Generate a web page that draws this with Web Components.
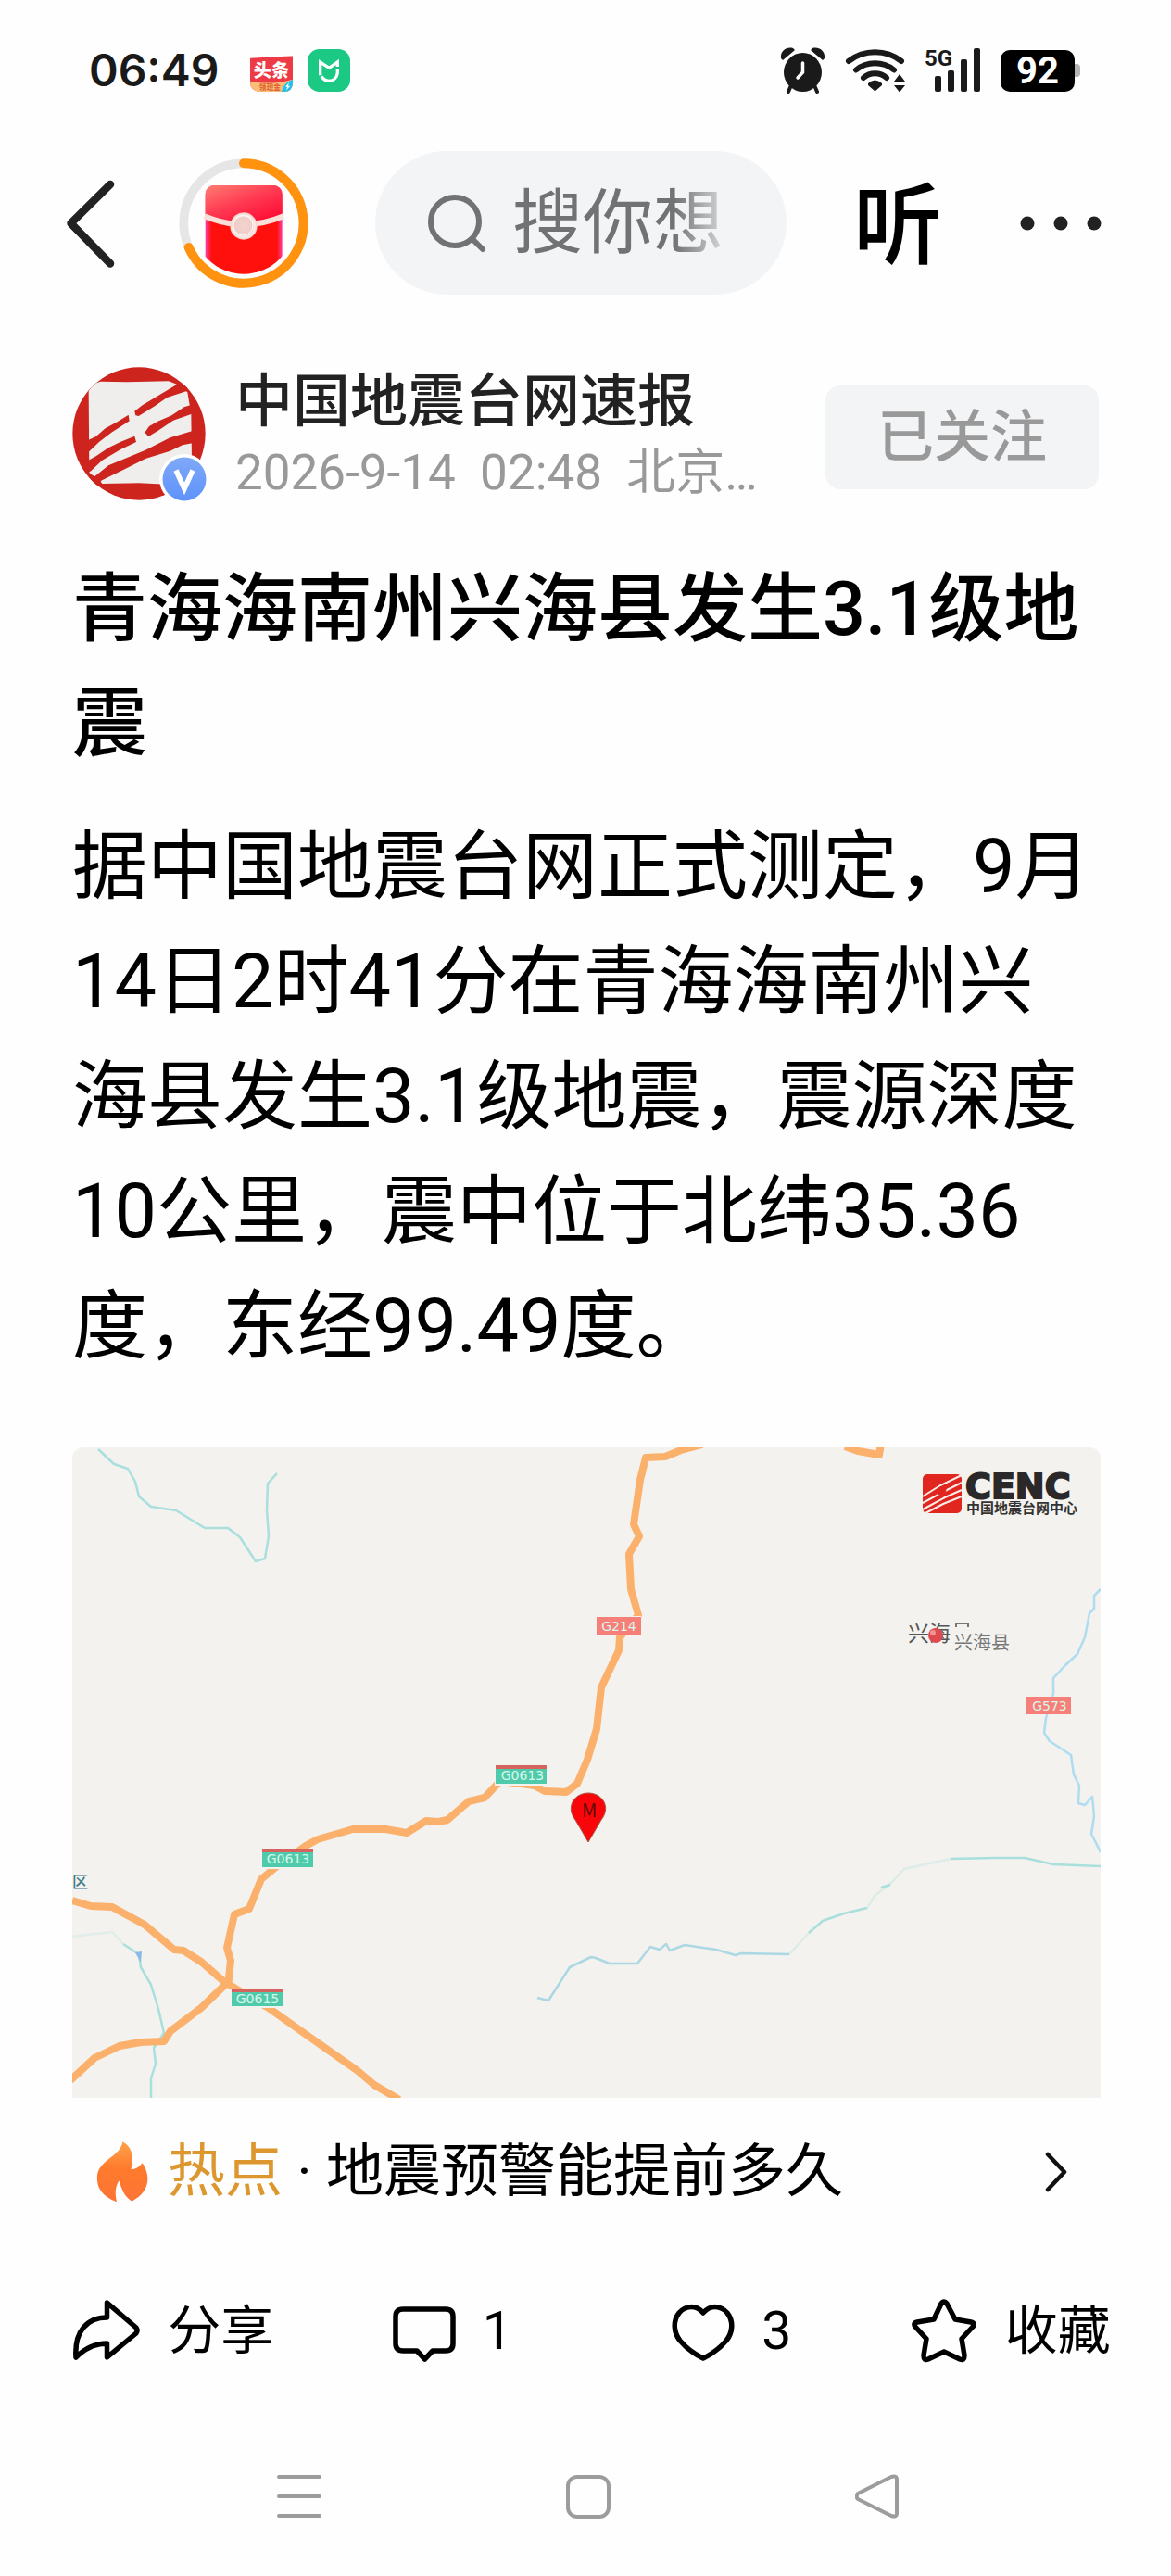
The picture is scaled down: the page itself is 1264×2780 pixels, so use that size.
<!DOCTYPE html>
<html lang="zh-CN">
<head>
<meta charset="utf-8">
<meta name="viewport" content="width=device-width, initial-scale=1">
<title>青海海南州兴海县发生3.1级地震</title>
<style>
  html { background: #fefefe; }
  body { margin: 0; color: #000; font-family: Roboto, "Noto Sans CJK SC", sans-serif; }
</style>
</head>
<body>
<article-screen></article-screen>

<script>
const define = (name, html) => {
  const template = document.createElement('template');
  template.innerHTML = `<style>
    :host { display: block; }
    * { box-sizing: border-box; }
    svg { display: block; flex: none; }
    button { font: inherit; color: inherit; background: none; border: 0; padding: 0; margin: 0; cursor: pointer; }
    a { color: inherit; text-decoration: none; }
  </style>` + html;
  customElements.define(name, class extends HTMLElement {
    constructor() {
      super();
      this.attachShadow({ mode: 'open' }).append(template.content.cloneNode(true));
    }
  });
};

define('status-bar', `
  <style>
    :host { display: flex; align-items: center; height: 152px; padding: 0 98px 0 96px; color: #1a1a1a; }
    time { font: 600 48px/60px Inter, sans-serif; }
    .apps { display: flex; gap: 16px; margin-left: 34px; align-items: center; }
    .system { display: flex; align-items: center; gap: 20px; margin-left: auto; }
    .battery { display: flex; align-items: center; }
    .level { width: 80px; height: 45px; border-radius: 10px; background: #000; color: #fff; font: 700 40px/46px Roboto, sans-serif; text-align: center; }
    .nub { width: 6px; height: 14px; background: #b5b5b5; border-radius: 0 4px 4px 0; }
  </style>
  <time>06:49</time>
  <div class="apps">
    <svg width="46" height="46" viewBox="252 42 138 138">
      <clipPath id="tt"><path d="M252 71L390 64V150Q390 180 360 180H284Q252 178 252 148Z"/></clipPath>
      <g clip-path="url(#tt)">
        <rect x="252" y="42" width="138" height="138" fill="#ee3a45"/>
        <path d="M252 146Q320 160 390 140V180H252Z" fill="#fbbd77"/>
        <path d="M354 180Q358 152 390 140V180Z" fill="#1cc3ee"/>
        <path d="M378 150L366 164H373L368 176L382 161H375Z" fill="#fff"/>
      </g>
      <text x="321" y="133" font-family="Noto Sans CJK SC" font-weight="900" font-size="58" fill="#fff" text-anchor="middle">头条</text>
      <text x="316" y="175" font-family="Noto Sans CJK SC" font-weight="700" font-size="23" fill="#dc5a2c" text-anchor="middle">领现金</text>
    </svg>
    <svg width="46" height="46" viewBox="438 42 138 138">
      <rect x="438" y="42" width="138" height="138" rx="38" fill="#1bc985"/>
      <path d="M479 127V84L508 103L535 84V99" fill="none" stroke="#fff" stroke-width="10"/>
      <path d="M535 106V118C533 136 521 145 507 145Q492 144 483 130" fill="none" stroke="#fff" stroke-width="10"/>
    </svg>
  </div>
  <div class="system">
    <svg width="50" height="50" viewBox="842 51 50 50" fill="#1a1a1a">
      <ellipse cx="866.5" cy="78" rx="20.5" ry="21"/>
      <path d="M843 63C842 55 849 50 856 52L858 54L845 65ZM890 63C891 55 884 50 877 52L875 54L888 65Z"/>
      <path d="M854 92L851 99M879 92L882 99" stroke="#1a1a1a" stroke-width="4" stroke-linecap="round"/>
      <path d="M866.500 68V78L861 84" fill="none" stroke="#fff" stroke-width="3.500" stroke-linecap="round"/>
    </svg>
    <svg width="66" height="50" viewBox="912 51 66 50" fill="none" stroke="#1a1a1a" stroke-width="6" stroke-linecap="round">
      <path d="M916 66A47 47 0 0 1 973 66M924 75.500A33 33 0 0 1 965 75.500M932 84A19 19 0 0 1 957 84"/>
      <path d="M937 90Q944.500 83 952 90V92L944.500 98.500L937 92Z" fill="#1a1a1a" stroke="none"/>
      <path d="M971 80L977 88H965ZM971 99.500L977 92H965Z" fill="#1a1a1a" stroke="none"/>
    </svg>
    <svg width="62" height="50" viewBox="997 51 62 50" overflow="visible">
      <text x="997" y="71" font-family="Roboto" font-weight="700" font-size="24" fill="#1a1a1a">5G</text>
      <g fill="#1a1a1a"><rect x="1008" y="82" width="7" height="17" rx="2"/><rect x="1022" y="76" width="7" height="23" rx="2"/><rect x="1036" y="64" width="7" height="35" rx="2"/><rect x="1050" y="52" width="7" height="47" rx="2"/></g>
    </svg>
    <div class="battery"><div class="level">92</div><div class="nub"></div></div>
  </div>`);

define('top-nav', `
  <style>
    :host { display: flex; align-items: center; gap: 72px; padding: 11px 75px 0 72px; }
    .search { flex: 1; min-width: 0; display: flex; align-items: center; gap: 28px; height: 155px; padding: 0 66px 0 56px; border-radius: 78px; background: #f3f4f6; }
    input { flex: 1; min-width: 0; width: 0; height: 100px; padding: 0; border: 0; outline: 0; background: none; font: 400 76px/100px Roboto, "Noto Sans CJK SC", sans-serif; color: #707274;
      -webkit-mask-image: linear-gradient(90deg, #000 76%, #0003 100%); mask-image: linear-gradient(90deg, #000 76%, #0003 100%); }
    input::placeholder { color: #707274; opacity: 1; }
    .listen { padding-top: 6px; font-size: 96px; line-height: 120px; font-weight: 500; }
  </style>
  <button aria-label="返回"><svg width="49" height="98" viewBox="72 192 49 98" overflow="visible"><path d="M119 199L76.500 241L119 284.500" fill="none" stroke="#222" stroke-width="8.500" stroke-linecap="round" stroke-linejoin="round"/></svg></button>
  <button aria-label="红包"><svg width="140" height="140" viewBox="21 393 420 420">
    <defs>
      <linearGradient id="flap" x1="0" y1="0" x2=".7" y2="1"><stop offset="0" stop-color="#ff7d72"/><stop offset=".5" stop-color="#ff3a52"/><stop offset="1" stop-color="#ff0932"/></linearGradient>
      <linearGradient id="pack"><stop offset="0" stop-color="#ff3fa0"/><stop offset=".08" stop-color="#ff100c"/><stop offset=".93" stop-color="#ff100c"/><stop offset="1" stop-color="#ff3fa0"/></linearGradient>
      <radialGradient id="seal"><stop offset="0" stop-color="#f3d3cf"/><stop offset=".7" stop-color="#efcdc8"/><stop offset=".8" stop-color="#fbeeea"/><stop offset="1" stop-color="#f3ccc5"/></radialGradient>
      <clipPath id="round"><circle cx="231" cy="603" r="164"/></clipPath>
    </defs>
    <circle cx="231" cy="603" r="194" fill="none" stroke="#e6e6e6" stroke-width="29"/>
    <path d="M231 409A194 194 0 1 1 53 681" fill="none" stroke="#ff920f" stroke-width="30" stroke-linecap="round"/>
    <g clip-path="url(#round)">
      <rect x="107" y="480" width="249" height="310" rx="30" fill="url(#pack)"/>
      <path d="M107 585V510Q107 480 137 480H326Q356 480 356 510V585Q231 640 107 585Z" fill="url(#flap)"/>
      <path d="M104 580Q231 634 360 580" fill="none" stroke="#fadfd8" stroke-width="18"/>
    </g>
    <circle cx="231" cy="612" r="44" fill="url(#seal)"/>
    <circle cx="229" cy="610" r="32" fill="none" stroke="#fff" stroke-width="3"/>
  </svg></button>
  <label class="search" aria-label="搜索">
    <svg width="64" height="64" viewBox="460 208 64 64" fill="none" stroke="#707274" stroke-width="6" stroke-linecap="round"><circle cx="490" cy="238" r="26"/><path d="M509 257L520 268"/></svg>
    <input type="text" placeholder="搜你想">
  </label>
  <button class="listen">听</button>
  <button aria-label="更多"><svg width="100" height="20" viewBox="1089 230 100 20" fill="#222"><circle cx="1109" cy="240" r="7.500"/><circle cx="1145" cy="240" r="7.500"/><circle cx="1181" cy="240" r="7.500"/></svg></button>`);

define('author-row', `
  <style>
    :host { display: flex; align-items: center; padding-top: 78px; }
    .avatar { position: relative; }
    .badge { position: absolute; right: -4px; bottom: -4px; }
    .who { flex: 1; min-width: 0; margin: 2px 0 -10px 32px; }
    .name { font-size: 62px; line-height: 72px; font-weight: 500; color: #222; }
    .meta { font-size: 53px; line-height: 80px; color: #999; white-space: pre; }
    .follow { width: 295px; height: 112px; border-radius: 16px; background: #f3f4f6; color: #999; font-size: 61px; line-height: 72px; font-weight: 500; margin: 8px 2px 0 0; }
  </style>
  <div class="avatar">
    <svg width="144" height="144" viewBox="23 33 432 432">
      <clipPath id="c"><circle cx="239" cy="249" r="215"/></clipPath>
      <g clip-path="url(#c)">
        <rect width="480" height="480" fill="#cd241e"/>
        <path d="M76 112Q90 84 115 80L200 82L335 79L358 88L396 115L408 185L411 412L300 412L240 409L120 411L78 375Z" fill="#efeeed"/>
        <g fill="#cd241e">
          <path d="M225 176L250 157L290 133L365 88L400 86L396 110L330 132L290 160L238 192L228 190Z"/>
          <path d="M258 245L272 225L300 209L345 190L385 163L410 155V185L350 206L300 240L270 258Z"/>
          <path d="M70 272L100 258L130 232L170 210L205 188L208 208L150 245L110 276L76 308Z"/>
          <path d="M70 338L100 322L140 295L180 275L225 257L230 276L180 300L120 335L85 368L72 378Z"/>
          <path d="M78 378L95 388L140 352L180 335L260 302L340 262L420 238V278L380 286L340 305L260 330L190 365L115 402L122 420L76 416Z"/>
        </g>
      </g>
    </svg>
    <svg class="badge" width="54" height="54" viewBox="0 0 54 54">
      <defs><linearGradient id="b" x2="0" y2="1"><stop stop-color="#7fa8f8"/><stop offset="1" stop-color="#5e93fb"/></linearGradient></defs>
      <circle cx="27" cy="27" r="27" fill="#fefefe"/><circle cx="27" cy="27" r="23.500" fill="url(#b)"/>
      <path d="M18 17.500L27 37.500L36 17.500" fill="none" stroke="#fff" stroke-width="5.500"/>
    </svg>
  </div>
  <div class="who">
    <div class="name">中国地震台网速报</div>
    <div class="meta">2026-9-14  02:48  北京…</div>
  </div>
  <button class="follow">已关注</button>`);

define('quake-map', `
  <style>
    :host { display: block; margin-top: 68px; border-radius: 12px 12px 0 0; overflow: hidden; background: #f3f2ee; }
    svg { width: 100%; height: auto; }
    text { font-family: "Noto Sans CJK SC", sans-serif; }
    .rd { fill: none; stroke: #fbb16c; stroke-width: 8; stroke-linejoin: round; }
    .rv { fill: none; stroke: #a9dfdc; stroke-width: 2.500; stroke-linejoin: round; }
    .tag { font: 400 14px "DejaVu Sans", sans-serif; fill: #d9f7ea; text-anchor: middle; }
  </style>
  <svg viewBox="0 0 1110 702" role="img" aria-label="震中位置地图">
    <path class="rv" d="M28 2L45 18L60 23L68 37L72 53L85 64L112 68L143 87L168 87L181 97L198 123L208 120L212 96L210 68L211 39L221 28"/>
    <path class="rv" d="M55 536L72 547L74 561L85 580L93 606L99 632L88 648L90 665L85 681V702"/>
    <path class="rv" d="M0 528L43 523L55 536" opacity=".25"/>
    <path class="rv" style="stroke:#acd8e4" d="M502 594L514 597L537 561L560 550L565 551L580 557H610L624 539L634 542L641 536L645 543L661 537L695 542L716 548L722 546L774 547"/>
    <path class="rv" opacity=".3" d="M774 547L795 524M858 497L867 483L881 473L898 455L948 444"/>
    <path class="rv" d="M795 524L810 511L833 503L858 497M873 475L883 472M948 444L997 443H1028L1059 450L1110 452"/>
    <path class="rv" style="stroke:#aedcf0" d="M1110 153L1103 160V174L1098 179L1093 205L1085 223L1072 235L1059 249V266L1051 292L1049 308L1055 317L1078 332L1081 353L1087 365L1086 384L1093 386L1101 377L1103 398L1100 417L1110 437"/>
    <path d="M68 545L75 544L74 556Z" fill="#8bb9e8"/>
    <path class="rd" d="M0 489L20 495L43 496L78 515L110 542L120 543L139 555L162 575L173 582L212 605L250 632L307 672L326 688L353 704"/>
    <path class="rd" d="M-2 683L24 659L51 646L74 642L99 641L106 630L139 605L168 577"/>
    <path class="rd" d="M168 582L171 554L167 540L175 504L191 498L204 466L221 452L252 430L265 423L303 412H338L361 416L382 403L395 404L405 402L428 382L445 378L462 360L499 365L510 371L533 372L545 363L556 337L566 304L571 259L590 219L591 205L611 181L603 153L601 115L612 96L606 83L613 35L619 11L640 10L657 3L680 -3"/>
    <path class="rd" d="M834 -1L848 4L871 8L873 -4"/>
    <g><rect x="565" y="182" width="49" height="21" fill="#f2f2ee"/><rect x="566" y="183" width="48" height="19" fill="#f67f79"/><text class="tag" x="590" y="198">G214</text></g>
    <g><rect x="1030" y="269" width="48" height="19" fill="#f67f79"/><text class="tag" x="1055" y="284">G573</text></g>
    <g><rect x="456" y="343" width="57" height="22" fill="#f2f2ee"/><rect x="457" y="343" width="55" height="20" fill="#4fcbab"/><rect x="457" y="343" width="55" height="4" fill="#d7635f"/><text class="tag" x="486" y="359">G0613</text></g>
    <g><rect x="204" y="433" width="57" height="22" fill="#f2f2ee"/><rect x="205" y="433" width="55" height="20" fill="#4fcbab"/><rect x="205" y="433" width="55" height="4" fill="#d7635f"/><text class="tag" x="233" y="449">G0613</text></g>
    <g><rect x="171" y="584" width="57" height="21" fill="#f2f2ee"/><rect x="172" y="584" width="55" height="19" fill="#4fcbab"/><rect x="172" y="584" width="55" height="4" fill="#d7635f"/><text class="tag" x="200" y="600">G0615</text></g>
    <text x="0" y="475" font-size="17" font-weight="500" fill="#3f7d88">区</text>
    <path d="M557 426L543 402C532 388 542 373 557 373S582 388 571 402Z" fill="#f9060a" stroke="#a45a4a" stroke-width="1"/>
    <text x="558" y="399" font-size="20" fill="#5c0a08" text-anchor="middle">M</text>
    <text x="902" y="209" font-size="23" fill="#555">兴海</text>
    <path d="M954 194V190H967V194" fill="none" stroke="#777" stroke-width="2"/>
    <text x="952" y="218" font-size="20" fill="#777">兴海县</text>
    <circle cx="932" cy="203" r="8" fill="#dd4b50"/><circle cx="929" cy="200" r="3" fill="#ef9490"/>
    <g transform="translate(918 29)">
      <rect width="42" height="42" rx="5" fill="#e0261f"/>
      <path d="M0 24L19 12M0 31L24 18L42 9M0 38L24 25L42 17M3 42L22 32L42 24M19 12L42 1" stroke="#f6eeea" stroke-width="2" fill="none"/>
      <path d="M17 15L27 12L24 21L16 23Z" fill="#e0261f"/>
    </g>
    <text x="964" y="55" style="font:700 38px 'DejaVu Sans', sans-serif" fill="#2b2829" stroke="#2b2829" stroke-width="2">CENC</text>
    <text x="965" y="71" font-size="15" font-weight="700" fill="#333">中国地震台网中心</text>
  </svg>`);

define('hot-topic', `
  <style>
    a { display: flex; align-items: center; height: 158px; padding: 2px 36px 0 26px; font-size: 62px; line-height: 80px; }
    span { margin-left: 20px; white-space: pre; }
    b { font-weight: 400; color: #dc972f; }
    .go { margin-left: auto; }
  </style>
  <a href="#hot">
    <svg width="57" height="66" viewBox="260 126 140 194" preserveAspectRatio="none">
      <defs><linearGradient id="f" x2="0" y2="1"><stop stop-color="#ffa24a"/><stop offset=".45" stop-color="#ff7a2c"/><stop offset="1" stop-color="#fd7436"/></linearGradient></defs>
      <path d="M330 127C354 145 360 170 352 214C368 214 374 204 382 194C404 232 404 286 354 316C334 300 328 280 320 250C308 275 310 295 314 318C276 300 262 275 262 242C262 185 322 178 330 127Z" fill="url(#f)"/>
    </svg>
    <span><b>热点</b> · 地震预警能提前多久</span>
    <svg class="go" width="24" height="44" viewBox="0 0 24 44"><path d="M3 3L21 22L3 41" fill="none" stroke="#111" stroke-width="4.500" stroke-linecap="round" stroke-linejoin="round"/></svg>
  </a>`);

define('action-button', `
  <style>
    button { display: flex; align-items: center; justify-content: center; gap: 29px; width: 100%; font-size: 57px; line-height: 72px; }
    ::slotted(svg) { display: block; flex: none; }
  </style>
  <button><slot name="icon"></slot><slot></slot></button>`);

define('action-bar', `
  <style>
    :host { display: grid; grid-template-columns: repeat(4, 1fr); align-items: center; height: 186px; padding: 2px 22px 0 36px; box-sizing: border-box; }
    svg { fill: none; stroke: #000; stroke-width: 5.500; stroke-linejoin: round; stroke-linecap: round; }
  </style>
  <action-button><svg slot="icon" width="74" height="70" viewBox="78 2480 74 70"><path d="M115.500 2484L147 2511Q149 2514 147 2517L115.500 2543V2528C100 2528 90 2535 82 2543C80 2515 94 2500 115.500 2500Z"/></svg>分享</action-button>
  <action-button><svg slot="icon" width="68" height="70" viewBox="422 2480 68 70"><path d="M433 2491H479Q487 2491 487 2499V2528Q487 2536 479 2536H465L456.500 2545L448 2536H433Q425 2536 425 2528V2499Q425 2491 433 2491Z"/></svg>1</action-button>
  <action-button><svg slot="icon" width="68" height="70" viewBox="723 2480 68 70"><path d="M757 2495C749 2486 738 2487 731 2495C724 2504 725 2516 732 2525Q742 2537 757 2544Q772 2537 782 2525C789 2516 790 2504 783 2495C776 2487 765 2486 757 2495Z"/></svg>3</action-button>
  <action-button><svg slot="icon" width="72" height="70" viewBox="982 2478 72 70"><path d="M1014 2483Q1017 2479 1020 2483L1029 2500L1046 2503Q1051 2504 1048 2508L1036 2521L1039 2539Q1039 2545 1034 2543L1017 2535L1000 2543Q995 2545 995 2539L998 2521L986 2508Q983 2504 988 2503L1006 2500Z"/></svg>收藏</action-button>`);

define('system-nav', `
  <style>
    :host { display: grid; grid-template-columns: repeat(3, 1fr); height: 172px; padding: 0 161px 0 167px; }
    button { display: grid; place-items: center; }
    svg { fill: none; stroke: #9c9c9c; stroke-width: 4; stroke-linejoin: round; stroke-linecap: round; }
  </style>
  <button aria-label="最近任务"><svg width="48" height="48"><path d="M2 3H46M2 24H46M2 45H46"/></svg></button>
  <button aria-label="主屏幕"><svg width="48" height="48"><rect x="2" y="3" width="44" height="43" rx="10"/></svg></button>
  <button aria-label="返回"><svg width="48" height="48"><path d="M3 21L39 3Q45 1 45 6V42Q45 47 39 45L3 27Q0 24 3 21Z"/></svg></button>`);

define('article-screen', `
  <style>
    main { padding: 0 76px 0 78px; }
    h1, p { margin: 0; font-size: 81px; line-height: 124px; font-weight: 400; }
    h1 { margin: 56px 0 30px; font-weight: 500; }
  </style>
  <header><status-bar></status-bar><top-nav></top-nav></header>
  <main>
    <author-row></author-row>
    <h1>青海海南州兴海县发生3.1级地震</h1>
    <p>据中国地震台网正式测定，9月14日2时41分在青海海南州兴海县发生3.1级地震，震源深度10公里，震中位于北纬35.36度，东经99.49度。</p>
    <quake-map></quake-map>
    <hot-topic></hot-topic>
  </main>
  <footer><action-bar></action-bar><system-nav></system-nav></footer>`);
</script>
</body>
</html>
